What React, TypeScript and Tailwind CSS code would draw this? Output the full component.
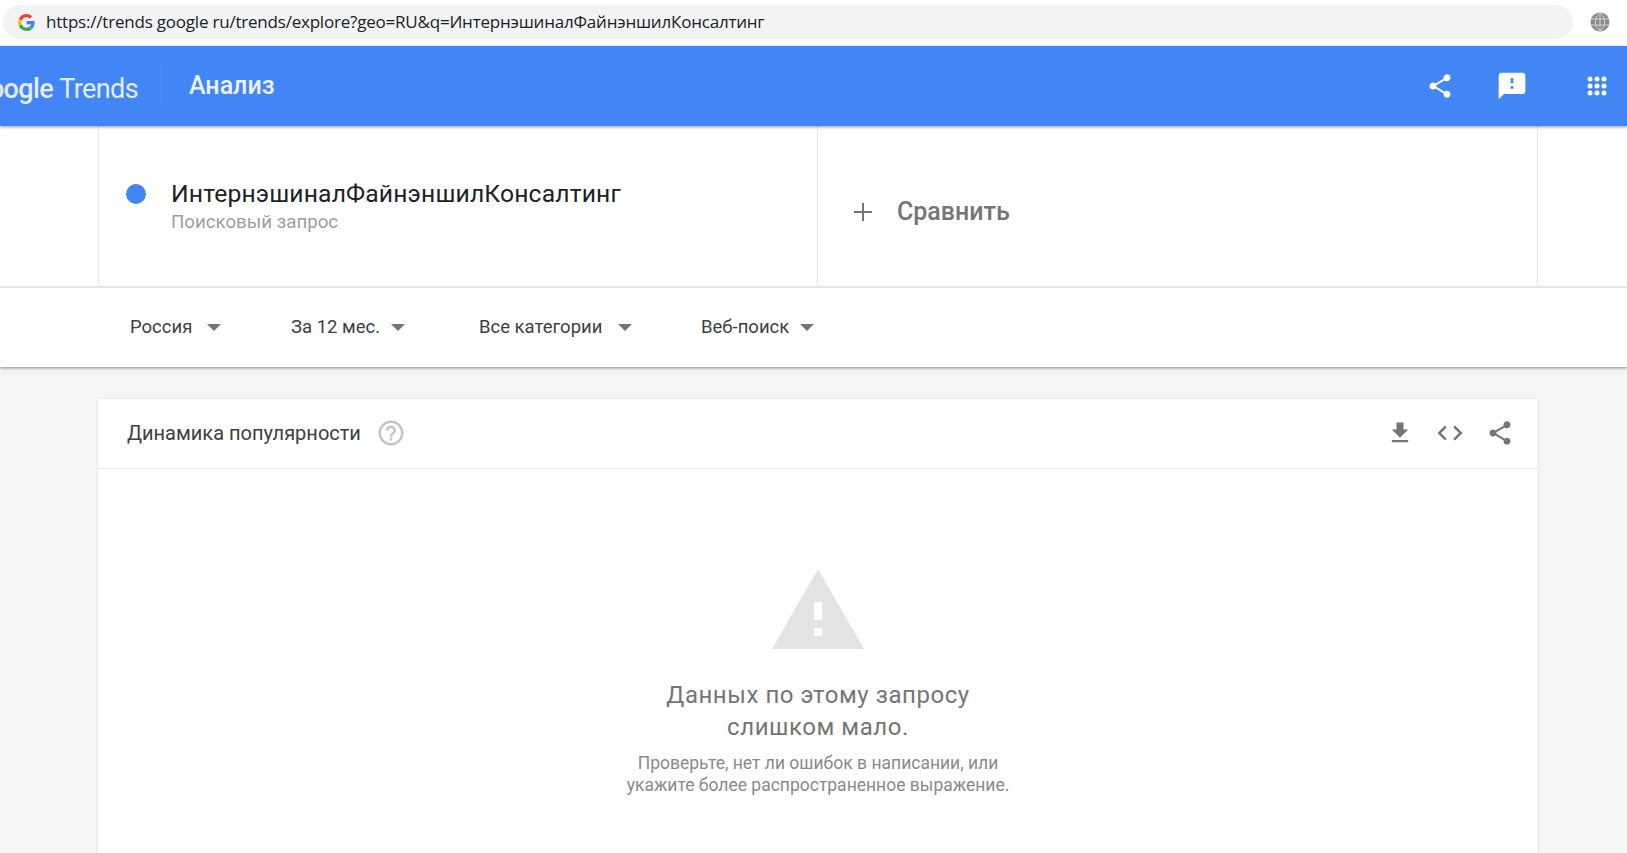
import React from "react";

const Caret = () => (
  <svg width="14" height="7" viewBox="0 0 14 7" className="shrink-0"><path d="M0 0h14L7 7z" fill="#757575" /></svg>
);

const Share = ({ color, size }: { color: string; size: number }) => (
  <svg width={size} height={size} viewBox="0 0 24 24" fill={color}>
    <path d="M18 16.08c-.76 0-1.44.3-1.96.77L8.91 12.7c.05-.23.09-.46.09-.7s-.04-.47-.09-.7l7.05-4.11c.54.5 1.25.81 2.04.81 1.66 0 3-1.34 3-3s-1.34-3-3-3-3 1.34-3 3c0 .24.04.47.09.7L8.04 9.81C7.5 9.31 6.79 9 6 9c-1.66 0-3 1.34-3 3s1.34 3 3 3c.79 0 1.5-.31 2.04-.81l7.12 4.16c-.05.21-.08.43-.08.65 0 1.61 1.31 2.92 2.92 2.92s2.92-1.31 2.92-2.92-1.31-2.92-2.92-2.92z" />
  </svg>
);

const Filter = ({ label, gap, width }: { label: string; gap: string; width: string }) => (
  <div className={`flex items-center ${gap} ${width} text-[18.5px] text-[#3c4043]`}>
    <span>{label}</span>
    <Caret />
  </div>
);

export default function App() {
  return (
    <div className="h-[853px] w-[1627px] overflow-hidden bg-[#f5f5f5] font-['Roboto',sans-serif]">
      <div className="flex h-[46px] items-center bg-white pl-[3px] pb-[6px] pt-[4px]">
        <div className="flex h-[34px] w-[1570px] items-center rounded-full bg-[#f1f3f4] pl-[15px]">
          <svg width="17" height="17" viewBox="0 0 48 48" className="shrink-0">
            <path fill="#EA4335" d="M24 9.5c3.5 0 6.6 1.2 9.1 3.6l6.8-6.8C35.8 2.4 30.4 0 24 0 14.6 0 6.5 5.4 2.6 13.2l7.9 6.2C12.4 13.7 17.7 9.5 24 9.5z" />
            <path fill="#4285F4" d="M47 24.5c0-1.6-.1-3.100-.4-4.500H24v9h12.900c-.6 3-2.200 5.500-4.700 7.200l7.600 5.900C44.200 38 47 31.800 47 24.500z" />
            <path fill="#FBBC05" d="M10.500 28.600c-.5-1.400-.8-3-.8-4.600s.3-3.200.8-4.600l-7.900-6.200C1 16.400 0 20.100 0 24s1 7.600 2.600 10.800z" />
            <path fill="#34A853" d="M24 48c6.500 0 11.900-2.100 15.900-5.800l-7.600-5.900c-2.200 1.500-5 2.300-8.200 2.300-6.300 0-11.600-4.200-13.500-9.900l-7.900 6.200C6.500 42.600 14.600 48 24 48z" />
          </svg>
          <span className="ml-[11px] font-['Open_Sans',sans-serif] text-[17px] tracking-[-0.21px] text-[#202124]">
            https://trends google ru/trends/explore?geo=RU&amp;q=ИнтернэшиналФайнэншилКонсалтинг
          </span>
        </div>
        <svg width="20" height="20" viewBox="0 0 20 20" className="ml-[17px] shrink-0">
          <circle cx="10" cy="10" r="9.500" fill="#8a8a8a" />
          <path d="M0.500 7h19M0.500 13h19M10 0.500v19M10 0.500c-6 5-6 14 0 19M10 0.500c6 5 6 14 0 19" stroke="#d4d4d4" strokeWidth="1" fill="none" />
        </svg>
      </div>

      <header className="relative z-10 flex h-[80px] items-center bg-[#4285f4] shadow-[0_1px_3px_rgba(0,0,0,0.4)]">
        <div className="mt-[7px] flex w-[138px] justify-end overflow-hidden whitespace-nowrap text-[27px] tracking-[-0.6px] text-white/85">
          <span className="font-medium">Google</span>
          <span className="ml-[6px] font-normal">Trends</span>
        </div>
        <div className="ml-[23px] h-[40px] w-px bg-white/10" />
        <span className="ml-[27px] text-[25px] font-medium text-white/90">Анализ</span>
        <div className="ml-auto flex items-center pr-[20px]">
          <Share color="#ffffff" size={28} />
          <svg width="32" height="32" viewBox="0 0 24 24" fill="#fff" className="ml-[42px]">
            <path d="M20 2H4c-1.100 0-2 .9-2 2v18l4-4h14c1.100 0 2-.9 2-2V4c0-1.100-.9-2-2-2zm-7 12h-2v-2h2v2zm0-4h-2V6h2v4z" />
          </svg>
          <svg width="20" height="20" viewBox="0 0 20 20" fill="#fff" className="ml-[59px]">
            {[3, 10, 17].flatMap((y) => [3, 10, 17].map((x) => <circle key={`${x}-${y}`} cx={x} cy={y} r="2.500" />))}
          </svg>
        </div>
      </header>

      <div className="bg-white shadow-[0_1px_3px_rgba(0,0,0,0.45)]">
        <div className="border-b-2 border-[#e6e6e6] pl-[98px] pr-[89px]">
          <div className="flex h-[160px] border-x border-[#e6e6e6]">
            <div className="flex w-[719px] items-center border-r border-[#e6e6e6] pl-[27px]">
              <div className="mb-[25px] h-[20px] w-[20px] rounded-full bg-[#4285f4]" />
              <div className="ml-[25px] mt-[2px]">
                <div className="text-[24.7px] leading-[31px] tracking-[0.14px] text-[#202124]">ИнтернэшиналФайнэншилКонсалтинг</div>
                <div className="text-[18.7px] leading-[27px] text-[#9aa0a6]">Поисковый запрос</div>
              </div>
            </div>
            <div className="flex flex-1 items-center pl-[35px] pt-[11px]">
              <svg width="20" height="20" viewBox="0 0 20 20" stroke="#757575" strokeWidth="2"><path d="M10 1v18M1 10h18" /></svg>
              <span className="ml-[24px] text-[25px] font-medium text-[#757575]">Сравнить</span>
            </div>
          </div>
        </div>
        <div className="flex h-[79px] items-center pl-[130px]">
          <Filter label="Россия" gap="gap-[15px]" width="w-[161px]" />
          <Filter label="За 12 мес." gap="gap-[11px]" width="w-[188px]" />
          <Filter label="Все категории" gap="gap-[16px]" width="w-[222px]" />
          <Filter label="Веб-поиск" gap="gap-[11px]" width="w-[120px]" />
        </div>
      </div>

      <main className="ml-[98px] mt-[32px] h-[460px] w-[1440px] bg-white shadow-[0_0_2px_rgba(0,0,0,0.12)]">
        <div className="flex h-[70px] items-center border-b border-[#e6e6e6] pb-[1px] pl-[29px] pr-[24px]">
          <span className="text-[20px] text-[#3c4043]">Динамика популярности</span>
          <svg width="30" height="30" viewBox="0 0 24 24" fill="#c4c4c4" className="ml-[15px]">
            <path d="M11 18h2v-2h-2v2zm1-16C6.480 2 2 6.480 2 12s4.480 10 10 10 10-4.480 10-10S17.520 2 12 2zm0 18c-4.410 0-8-3.590-8-8s3.590-8 8-8 8 3.590 8 8-3.590 8-8 8zm0-14c-2.210 0-4 1.790-4 4h2c0-1.100.9-2 2-2s2 .9 2 2c0 2-3 1.750-3 5h2c0-2.250 3-2.500 3-5 0-2.210-1.790-4-4-4z" />
          </svg>
          <div className="ml-auto flex items-center">
            <svg width="28" height="28" viewBox="0 0 24 24" fill="#757575"><path d="M19 9h-4V3H9v6H5l7 7 7-7zM5 18v2h14v-2H5z" /></svg>
            <svg width="30" height="30" viewBox="0 0 24 24" fill="#757575" className="ml-[21px]"><path d="M9.400 16.600 4.800 12l4.600-4.600L8 6l-6 6 6 6 1.400-1.400zm5.200 0 4.600-4.600-4.600-4.600L16 6l6 6-6 6-1.400-1.400z" /></svg>
            <div className="ml-[21px]"><Share color="#757575" size={28} /></div>
          </div>
        </div>
        <div className="flex flex-col items-center pt-[100px] text-center">
          <svg width="92" height="80" viewBox="0 0 92 80">
            <path d="M46 0 92 80H0z" fill="#e3e3e3" />
            <rect x="42" y="33" width="8" height="18" fill="#fff" />
            <rect x="42" y="59" width="8" height="8" fill="#fff" />
          </svg>
          <div className="mt-[30px] text-[24px] leading-[32px] tracking-[0.55px] text-[#757575]">
            Данных по этому запросу
            <br />
            слишком мало.
          </div>
          <div className="mt-[9px] text-[17.500px] leading-[22px] text-[#8a8a8a]">
            Проверьте, нет ли ошибок в написании, или
            <br />
            укажите более распространенное выражение.
          </div>
        </div>
      </main>
    </div>
  );
}
